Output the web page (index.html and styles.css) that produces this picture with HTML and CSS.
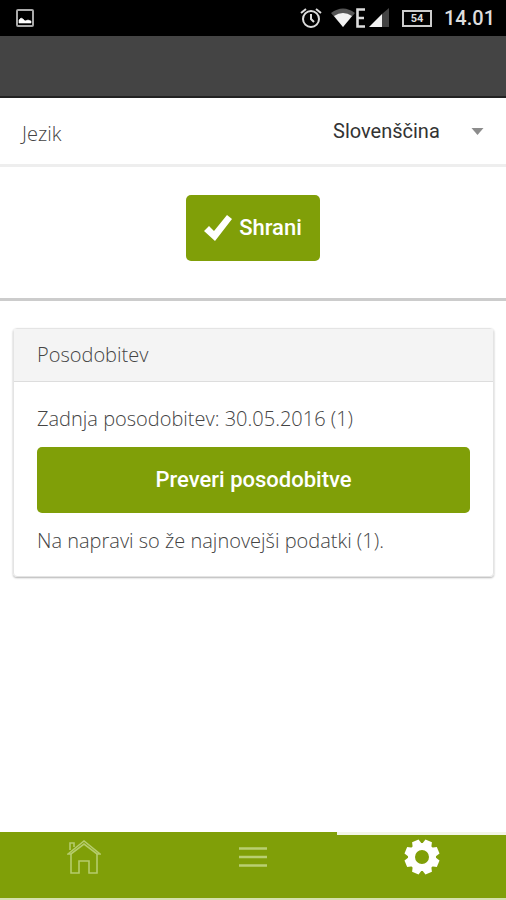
FILE: index.html
```html
<!DOCTYPE html>
<html lang="sl">
<head>
<meta charset="utf-8">
<meta name="viewport" content="width=device-width, initial-scale=1">
<title>Nastavitve</title>
<link rel="stylesheet" href="styles.css">
</head>
<body>
<div class="status">
  <svg class="status-photo" width="18" height="18" viewBox="0 0 18 18" aria-hidden="true">
    <rect x="1" y="1" width="16" height="16" rx="1" fill="none" stroke="#aaa" stroke-width="2"/>
    <path d="M3 14v-3l2-2 2 1 2 2 3-1 3 1v2z" fill="#fff" stroke="#fff" stroke-width=".6"/>
  </svg>
  <div class="status-right">
    <svg width="22" height="22" viewBox="0 0 22 22" fill="none" stroke="#ddd" stroke-width="2" aria-hidden="true">
      <circle cx="11" cy="12" r="8"/>
      <path d="M11 7v5l3 3M1 6l5-4M21 6l-5-4"/>
    </svg>
    <svg class="status-wifi" width="24" height="20" viewBox="0 0 24 20" aria-hidden="true">
      <path d="M0 5Q12-4 24 5L12 19z" fill="#555"/>
      <path d="M3 8Q12 2 21 8L12 19z" fill="#f2f2f2"/>
    </svg>
    <svg class="status-signal" width="34" height="20" viewBox="0 0 34 20" aria-hidden="true">
      <path d="M10 1.5H2.5v17H10M2 10h7" fill="none" stroke="#ddd" stroke-width="2.6"/>
      <path d="M27 6L34 0v19h-7z" fill="#444"/>
      <path d="M14 19L27 6v13z" fill="#f2f2f2"/>
    </svg>
    <span class="battery">54</span>
    <span class="clock">14.01</span>
  </div>
</div>
<header class="topbar"></header>
<main>
  <div class="language">
    <label for="lang">Jezik</label>
    <div class="picker">
      <select id="lang"><option>Slovenščina</option></select>
      <svg width="13" height="7" viewBox="0 0 12 7" aria-hidden="true"><path d="M0 0h12L6 7z" fill="#8c8c8c"/></svg>
    </div>
  </div>
  <div class="save">
    <button class="button" type="button">
      <svg width="28" height="28" viewBox="0 0 28 28" aria-hidden="true"><path d="M0 17L5 12L10 17L23 1L28 5L11 27z" fill="#fff"/></svg>
      Shrani
    </button>
  </div>
  <section class="card">
    <h2>Posodobitev</h2>
    <div class="card-body">
      <p>Zadnja posodobitev: 30.05.2016 (1)</p>
      <button class="button wide" type="button">Preveri posodobitve</button>
      <p>Na napravi so že najnovejši podatki (1).</p>
    </div>
  </section>
</main>
<nav class="tabs">
  <a href="#home" aria-label="Domov">
    <svg width="34" height="36" viewBox="0 0 34 36" fill="none" stroke="#b5cc6c" stroke-width="1.6" aria-hidden="true">
      <path d="M1 15L17 2L33 15H30L17 5L4 15z"/>
      <path d="M3 11V4h4v4M4 15v19h8V22h10v12h8V15"/>
    </svg>
  </a>
  <a href="#menu" aria-label="Meni">
    <svg width="28" height="36" viewBox="0 0 28 36" fill="none" stroke="#b9cf72" stroke-width="2.4" aria-hidden="true">
      <path d="M0 9.5h28M0 18h28M0 26.5h28"/>
    </svg>
  </a>
  <a class="active" href="#settings" aria-label="Nastavitve">
    <svg width="36" height="36" viewBox="-18 -18 36 36" aria-hidden="true">
      <circle r="10.5" fill="none" stroke="#fff" stroke-width="7"/>
      <g fill="#fff" transform="rotate(22.5)">
        <path id="tooth" d="M-5-12L-3.5-17.5h7L5-12z"/>
        <use href="#tooth" transform="rotate(45)"/>
        <use href="#tooth" transform="rotate(90)"/>
        <use href="#tooth" transform="rotate(135)"/>
        <use href="#tooth" transform="rotate(180)"/>
        <use href="#tooth" transform="rotate(225)"/>
        <use href="#tooth" transform="rotate(270)"/>
        <use href="#tooth" transform="rotate(315)"/>
      </g>
    </svg>
  </a>
</nav>
</body>
</html>
```
FILE: styles.css
```css
* {
  box-sizing: border-box;
}

body {
  display: flex;
  flex-direction: column;
  min-height: 100vh;
  margin: 0;
  background: #fff;
  color: #444;
  font: 300 20px/28px "Open Sans", sans-serif;
}

.status {
  display: flex;
  align-items: center;
  justify-content: space-between;
  height: 36px;
  padding: 0 11px 0 16px;
  background: #000;
  color: #ddd;
  font-family: Roboto, sans-serif;
}

.status-right {
  display: flex;
  align-items: center;
}

.status-wifi {
  margin-left: 9px;
}

.status-signal {
  margin-right: 13px;
}

.battery {
  width: 30px;
  height: 17px;
  border: 2px solid #ccc;
  font-size: 11px;
  font-weight: 700;
  line-height: 13px;
  text-align: center;
}

.clock {
  margin-left: 12px;
  font-size: 20px;
  font-weight: 500;
}

.topbar {
  height: 62px;
  background: #444;
  border-bottom: 2px solid #222;
}

main {
  flex: 1;
}

.language {
  display: flex;
  align-items: center;
  justify-content: space-between;
  height: 69px;
  padding: 0 22px;
  border-bottom: 3px solid #eee;
}

.language label {
  padding-top: 5px;
}

.picker {
  display: flex;
  align-items: center;
  gap: 31px;
}

select {
  appearance: none;
  padding: 0;
  border: 0;
  background: none;
  color: #333;
  font: 400 20px/28px Roboto, sans-serif;
}

.save {
  display: flex;
  justify-content: center;
  padding: 28px 0 37px;
  border-bottom: 3px solid #ccc;
}

.button {
  display: flex;
  align-items: center;
  justify-content: center;
  gap: 7px;
  height: 66px;
  padding: 0 18px;
  border: 0;
  border-radius: 5px;
  background: #809f08;
  color: #fff;
  font: 500 22px/28px Roboto, sans-serif;
}

.wide {
  width: 100%;
}

.card {
  margin: 27px 12px 27px 13px;
  border: 1px solid #e4e4e4;
  border-radius: 4px;
  box-shadow: 0 1px 2px rgba(0, 0, 0, 0.3);
}

.card h2 {
  margin: 0;
  padding: 12px 23px;
  border-bottom: 1px solid #ddd;
  background: #f4f4f4;
  font-size: 20px;
  font-weight: 300;
}

.card-body {
  padding: 23px 23px 21px;
}

.card p {
  margin: 0;
}

.card .button {
  margin: 14px 0;
}

.tabs {
  display: grid;
  grid-template-columns: 1fr 1fr 1fr;
  height: 68px;
  border-bottom: 2px solid #d5e0ad;
  background: #809f08;
}

.tabs a {
  display: flex;
  justify-content: center;
  padding-top: 7px;
}

.tabs .active {
  padding-top: 4px;
  border-top: 3px solid #f2f5e6;
}
```
